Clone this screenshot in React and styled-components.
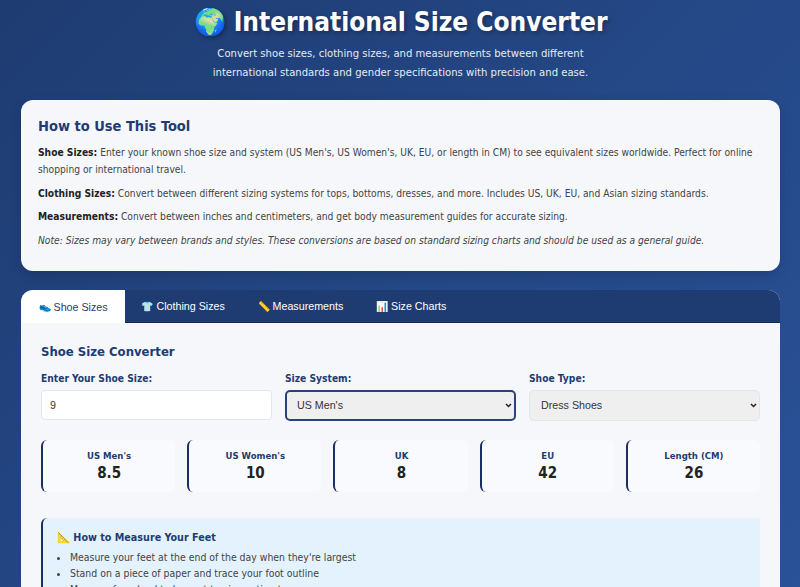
import React from 'react';
import styled, { createGlobalStyle } from 'styled-components';

const GlobalStyle = createGlobalStyle`
  * { box-sizing: border-box; }
  html, body { margin: 0; height: 587px; overflow: hidden; }
  body {
    font-family: "DejaVu Sans", sans-serif;
    font-stretch: condensed;
    background: linear-gradient(135deg, #1e3c72 0%, #2a5298 100%);
    color: #333;
  }
`;

const chevron = `url("data:image/svg+xml,%3Csvg xmlns='http://www.w3.org/2000/svg' width='7' height='5'%3E%3Cpath d='M1 1l2.500 2.500L6 1' fill='none' stroke='%23222' stroke-width='1.500'/%3E%3C/svg%3E")`;

const Page = styled.div`
  width: 800px;
  padding: 0 20px 0 21px;
`;

const Header = styled.header`
  text-align: center;
  color: #fff;
  padding-top: 4px;
  height: 100px;
`;

const Title = styled.h1`
  margin: 0;
  font-size: 26px;
  line-height: 36px;
  font-weight: 700;
  text-shadow: 2px 2px 4px rgba(0, 0, 0, 0.3);
`;

const Subtitle = styled.p`
  margin: 4px auto 0;
  width: 400px;
  font-size: 11.2px;
  line-height: 19px;
  color: #e6eaf2;
`;

const InfoCard = styled.section`
  background: #f5f7fb;
  border-radius: 12px;
  padding: 16px 17px 0;
  height: 171px;
  box-shadow: 0 4px 12px rgba(0, 0, 0, 0.15);
`;

const InfoTitle = styled.h2`
  margin: 0 0 8px;
  font-size: 14.5px;
  line-height: 20px;
  color: #1e3c72;
`;

const InfoText = styled.p`
  margin: 0 0 6.5px;
  font-size: 10.2px;
  line-height: 17px;
  color: #444;
  font-style: ${p => (p.$note ? 'italic' : 'normal')};
  strong { color: #222; }
`;

const Panel = styled.section`
  margin-top: 19px;
  background: #f5f7fb;
  border-radius: 12px;
  overflow: hidden;
`;

const TabBar = styled.nav`
  display: flex;
  background: #1e3c72;
  height: 33px;
  border-bottom: 1px solid #14295a;
`;

const Tab = styled.div`
  display: flex;
  align-items: center;
  gap: 3px;
  padding: 0 ${p => (p.$active ? '17.5px' : '16.4px')};
  font-family: "Liberation Sans", sans-serif;
  font-stretch: normal;
  font-size: 10.7px;
  color: ${p => (p.$active ? '#1e3c72' : '#fff')};
  background: ${p => (p.$active ? '#fff' : 'transparent')};
  height: ${p => (p.$active ? '33px' : '32px')};
`;

const TabIcon = styled.span`
  font-size: 10px;
`;

const Body = styled.div`
  padding: 20px 20px 20px;
`;

const PanelTitle = styled.h3`
  margin: 0 0 11px;
  font-size: 13px;
  line-height: 18px;
  color: #1e3c72;
`;

const FormRow = styled.div`
  display: grid;
  grid-template-columns: 231px 231px 231px;
  gap: 13px;
`;

const Field = styled.div`
  display: flex;
  flex-direction: column;
`;

const Label = styled.label`
  font-size: 10.2px;
  line-height: 14px;
  font-weight: 700;
  color: #1e3c72;
  margin-bottom: 4px;
`;

const Input = styled.input`
  height: 30px;
  border: 1px solid #e1e5ec;
  border-radius: 4px;
  background: #fff;
  padding: 0 8px;
  font-family: "Liberation Sans", sans-serif;
  font-size: 10.7px;
  color: #333;
`;

const Select = styled.select`
  appearance: none;
  height: 31px;
  border: ${p => (p.$focused ? '2px solid #2a4278' : '1px solid #e1e5ec')};
  border-radius: 5px;
  background: #efefef ${chevron} no-repeat right 2px center;
  padding: 0 ${p => (p.$focused ? '10px' : '11px')} 1px;
  font-family: "Liberation Sans", sans-serif;
  font-size: 10.7px;
  color: #333;
`;

const Results = styled.div`
  margin-top: 19px;
  display: grid;
  grid-template-columns: repeat(5, 1fr);
  gap: 12px;
`;

const ResultCard = styled.div`
  height: 52px;
  background: #f9fafd;
  border-left: 2.500px solid #1a2f63;
  border-radius: 6px;
  text-align: center;
  padding-top: 9px;
`;

const ResultLabel = styled.div`
  font-size: 9.5px;
  line-height: 13px;
  font-weight: 700;
  color: #1e3c72;
  margin-bottom: 2px;
`;

const ResultValue = styled.div`
  font-size: 15px;
  line-height: 18px;
  font-weight: 700;
  color: #222;
`;

const Guide = styled.div`
  margin-top: 26px;
  background: #e3f2fd;
  border-left: 2.500px solid #1a2f63;
  border-radius: 6px 0 0 6px;
  padding: 13px 14px 14px;
`;

const GuideTitle = styled.h4`
  margin: 0 0 4px;
  font-size: 10.7px;
  line-height: 14px;
  color: #1e3c72;
`;

const GuideList = styled.ul`
  margin: 0;
  padding-left: 13px;
  font-size: 10.4px;
  line-height: 16px;
  color: #444;
`;

const sizes = [
  ["US Men's", '8.5'],
  ["US Women's", '10'],
  ['UK', '8'],
  ['EU', '42'],
  ['Length (CM)', '26'],
];

const tabs = [
  ['👟', 'Shoe Sizes'],
  ['👕', 'Clothing Sizes'],
  ['📏', 'Measurements'],
  ['📊', 'Size Charts'],
];

export default function App() {
  return (
    <Page>
      <GlobalStyle />
      <Header>
        <Title>🌍 International Size Converter</Title>
        <Subtitle>
          Convert shoe sizes, clothing sizes, and measurements between different international standards and gender specifications with precision and ease.
        </Subtitle>
      </Header>
      <InfoCard>
        <InfoTitle>How to Use This Tool</InfoTitle>
        <InfoText><strong>Shoe Sizes:</strong> Enter your known shoe size and system (US Men's, US Women's, UK, EU, or length in CM) to see equivalent sizes worldwide. Perfect for online shopping or international travel.</InfoText>
        <InfoText><strong>Clothing Sizes:</strong> Convert between different sizing systems for tops, bottoms, dresses, and more. Includes US, UK, EU, and Asian sizing standards.</InfoText>
        <InfoText><strong>Measurements:</strong> Convert between inches and centimeters, and get body measurement guides for accurate sizing.</InfoText>
        <InfoText $note>Note: Sizes may vary between brands and styles. These conversions are based on standard sizing charts and should be used as a general guide.</InfoText>
      </InfoCard>
      <Panel>
        <TabBar>
          {tabs.map(([icon, label], i) => (
            <Tab key={label} $active={i === 0}>
              <TabIcon>{icon}</TabIcon>
              {label}
            </Tab>
          ))}
        </TabBar>
        <Body>
          <PanelTitle>Shoe Size Converter</PanelTitle>
          <FormRow>
            <Field>
              <Label>Enter Your Shoe Size:</Label>
              <Input defaultValue="9" />
            </Field>
            <Field>
              <Label>Size System:</Label>
              <Select $focused defaultValue="us-men">
                <option value="us-men">US Men's</option>
              </Select>
            </Field>
            <Field>
              <Label>Shoe Type:</Label>
              <Select defaultValue="dress">
                <option value="dress">Dress Shoes</option>
              </Select>
            </Field>
          </FormRow>
          <Results>
            {sizes.map(([label, value]) => (
              <ResultCard key={label}>
                <ResultLabel>{label}</ResultLabel>
                <ResultValue>{value}</ResultValue>
              </ResultCard>
            ))}
          </Results>
          <Guide>
            <GuideTitle>📐 How to Measure Your Feet</GuideTitle>
            <GuideList>
              <li>Measure your feet at the end of the day when they're largest</li>
              <li>Stand on a piece of paper and trace your foot outline</li>
              <li>Measure from heel to longest toe in centimeters</li>
            </GuideList>
          </Guide>
        </Body>
      </Panel>
    </Page>
  );
}
